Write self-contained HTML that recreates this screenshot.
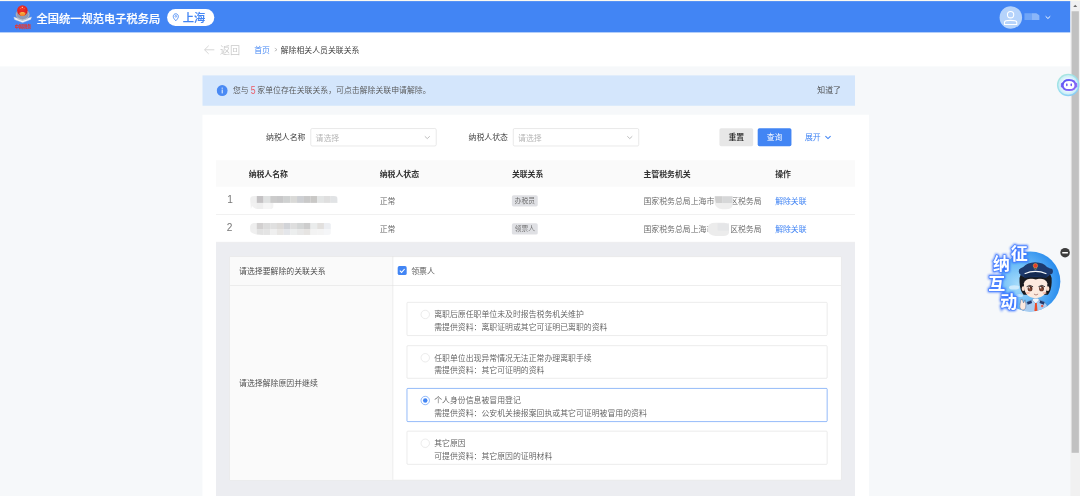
<!DOCTYPE html>
<html lang="zh-CN">
<head>
<meta charset="utf-8">
<title>解除相关人员关联关系</title>
<style>
html,body{margin:0;padding:0;width:1080px;height:496px;overflow:hidden;background:#f6f8fa;}
#stage{position:absolute;left:0;top:0;width:1920px;height:882px;transform:scale(0.5625);transform-origin:0 0;
  font-family:"Liberation Sans","Noto Sans CJK SC",sans-serif;font-size:14px;font-weight:350;color:#333;overflow:hidden;background:#f6f8fa;}
#stage *{box-sizing:border-box;}
.abs{position:absolute;}
.t{position:absolute;white-space:nowrap;line-height:22px;height:22px;}
/* top */
#topstrip{left:0;top:0;width:1920px;height:1.8px;background:#fbf9ef;}
#header{left:0;top:1.8px;width:1903px;height:56px;background:#4285f4;}
#title{left:65px;top:18.5px;font-size:20px;font-weight:500;-webkit-text-stroke:0.35px #fff;color:#fff;line-height:28px;height:28px;letter-spacing:0;}
#pill{left:297px;top:16px;width:84px;height:30px;border-radius:15px;background:#fff;}
#pilltxt{left:325px;top:17.9px;font-size:20px;font-weight:500;-webkit-text-stroke:0.3px #4285f4;color:#4285f4;line-height:28px;height:28px;}
#avatar{left:1777px;top:11px;width:40px;height:40px;border-radius:50%;background:#b5d3fb;}
#uname{left:1820.8px;top:23.4px;width:27.6px;height:12.2px;background:linear-gradient(90deg,#6fa5f7 0,#6fa5f7 50%,#8ab6f9 50%,#8ab6f9 100%);clip-path:polygon(0 0,78% 0,100% 35%,100% 100%,0 100%);}
/* breadcrumb */
#crumb{left:0;top:57.5px;width:1903px;height:60.3px;background:#fff;}
#back{left:391px;top:76.6px;font-size:18px;color:#c9c9c9;line-height:26px;height:26px;}
#home{left:452px;top:78px;color:#4285f4;}
#sep{left:487px;top:78.3px;color:#9a9a9a;font-size:11.5px;transform:scaleX(0.72);font-weight:400;}
#cur{left:499px;top:78px;color:#333;}
/* banner */
#banner{left:360px;top:133.5px;width:1160px;height:54.5px;background:#d4e6fc;}
#bannertxt{left:414px;top:150px;color:#555;}
#bannertxt b{color:#ea5a65;font-weight:400;font-size:18.4px;display:inline-block;transform:scaleX(0.84);margin:0 -1.6px 0 -1px;line-height:22px;vertical-align:top;position:relative;top:0.4px;}
#know{left:1453px;top:150px;color:#444;}
/* card */
#card{left:360px;top:204px;width:1184.6px;height:700px;background:#fff;}
.lbl{color:#333;}
.sel{height:32px;border:1px solid #d8d8d8;border-radius:3px;background:#fff;}
.ph{color:#b2b2b2;}
.btn{height:32px;border-radius:3px;text-align:center;line-height:32px;width:60px;}
/* table */
#thead{left:384px;top:284.5px;width:1136px;height:47.5px;background:#fafafa;}
.th{font-weight:700;color:#333;}
.td{color:#666;}
.hline{height:1px;background:#e7e7e7;left:384px;width:1136px;}
.tag{height:20px;width:46px;border-radius:3px;background:#dfe0e4;color:#666;font-size:12px;line-height:20px;text-align:center;}
.lnk{color:#3f83f4;font-weight:400;}
#panel{left:384px;top:430.7px;width:1136px;height:460px;background:#ecedf1;}
#inner{left:408px;top:455.5px;width:1088px;height:398px;background:#fff;border:1px solid #e0e0e0;}
#lblcol{left:409px;top:456.5px;width:289px;height:396px;background:#fafafa;}
.opt{left:723px;width:748px;height:59.5px;border:1px solid #dedede;border-radius:2px;background:#fff;}
.radio{width:16px;height:16px;border-radius:50%;border:1px solid #dcdcdc;background:#fff;}
.o1{color:#5c5c5c;}
/* scrollbar */
#sbtrack{left:1903px;top:1.8px;width:17px;height:881px;background:#f1f1f1;}
#sbthumb{left:1905px;top:19.5px;width:13px;height:785px;background:#c1c1c1;}
</style>
</head>
<body>
<div id="stage">
  <div class="abs" id="topstrip"></div>
  <div class="abs" id="header"></div>
  <div class="abs" id="crumb"></div>

  <!-- header content -->
  <div class="t" id="title">全国统一规范电子税务局</div>
  <div class="abs" id="pill"></div>
  <div class="t" id="pilltxt">上海</div>
  <div class="abs" id="avatar"></div>
  <div class="abs" id="uname"></div>

  <!-- breadcrumb -->
  <div class="t" id="back">返回</div>
  <div class="t" id="home">首页</div>
  <div class="t" id="sep">&gt;</div>
  <div class="t" id="cur">解除相关人员关联关系</div>

  <!-- banner -->
  <div class="abs" id="banner"></div>
  <div class="t" id="bannertxt">您与 <b>5</b> 家单位存在关联关系，可点击解除关联申请解除。</div>
  <div class="t" id="know">知道了</div>

  <!-- card -->
  <div class="abs" id="card"></div>
  <div class="t lbl" style="left:473px;top:233px;">纳税人名称</div>
  <div class="abs sel" style="left:552px;top:228px;width:224px;"></div>
  <div class="t ph" style="left:561px;top:233.8px;">请选择</div>
  <div class="t lbl" style="left:833px;top:233px;">纳税人状态</div>
  <div class="abs sel" style="left:912px;top:228px;width:224px;"></div>
  <div class="t ph" style="left:921px;top:233.8px;">请选择</div>
  <div class="abs btn" style="left:1279px;top:228px;background:#e7e7e7;color:#1a1a1a;font-weight:500;">重置</div>
  <div class="abs btn" style="left:1347px;top:228px;background:#4285f4;color:#fff;">查询</div>
  <div class="t lnk" style="left:1431px;top:233px;">展开</div>

  <!-- table -->
  <div class="abs" id="thead"></div>
  <div class="t th" style="left:442px;top:298.5px;">纳税人名称</div>
  <div class="t th" style="left:675px;top:298.5px;">纳税人状态</div>
  <div class="t th" style="left:910px;top:298.5px;">关联关系</div>
  <div class="t th" style="left:1144px;top:298.5px;">主管税务机关</div>
  <div class="t th" style="left:1378px;top:298.5px;">操作</div>

  <div class="t td" style="left:403.8px;top:343.6px;font-size:18px;color:#777;">1</div>
  <div class="t td" style="left:675px;top:346px;">正常</div>
  <div class="abs tag" style="left:910px;top:347px;">办税员</div>
  <div class="t td" style="left:1144px;top:346px;">国家税务总局上海市<span class="blur" style="display:inline-block;width:28px;"></span>区税务局</div>
  <div class="t lnk" style="left:1378px;top:346px;">解除关联</div>
  <div class="abs hline" style="top:380.5px;"></div>

  <div class="t td" style="left:403.2px;top:393.6px;font-size:18px;color:#777;">2</div>
  <div class="t td" style="left:675px;top:396.5px;">正常</div>
  <div class="abs tag" style="left:910px;top:396.5px;">领票人</div>
  <div class="t td" style="left:1144px;top:396.5px;">国家税务总局上海市<span class="blur" style="display:inline-block;width:28px;"></span>区税务局</div>
  <div class="t lnk" style="left:1378px;top:396.5px;">解除关联</div>

  <!-- expanded panel -->
  <div class="abs" id="panel"></div>
  <div class="abs hline" style="top:430.4px;background:#e6e6e9;"></div>
  <div class="abs" id="inner"></div>
  <div class="abs" id="lblcol"></div>
  <div class="abs" style="left:698px;top:456px;width:1px;height:397px;background:#e0e0e0;"></div>
  <div class="abs" style="left:409px;top:507px;width:1086px;height:1px;background:#e0e0e0;"></div>
  <div class="t" style="left:425px;top:471.3px;color:#444;">请选择要解除的关联关系</div>
  <div class="abs" style="left:707px;top:473.2px;width:16px;height:16px;border-radius:3px;background:#4285f4;"></div>
  <div class="t" style="left:731px;top:471px;color:#555;">领票人</div>
  <div class="t" style="left:425px;top:670px;color:#444;">请选择解除原因并继续</div>

  <div class="abs opt" style="top:537.4px;"></div>
  <div class="abs radio" style="left:748px;top:551.4px;"></div>
  <div class="t o1" style="left:772px;top:548.4px;">离职后原任职单位未及时报告税务机关维护</div>
  <div class="t o1" style="left:772px;top:570.6px;">需提供资料：离职证明或其它可证明已离职的资料</div>

  <div class="abs opt" style="top:613.7px;"></div>
  <div class="abs radio" style="left:748px;top:627.7px;"></div>
  <div class="t o1" style="left:772px;top:624.7px;">任职单位出现异常情况无法正常办理离职手续</div>
  <div class="t o1" style="left:772px;top:646.9px;">需提供资料：其它可证明的资料</div>

  <div class="abs opt" style="top:690px;border-color:#4285f4;"></div>
  <div class="abs radio" style="left:748px;top:704px;border-color:#4285f4;"></div>
  <div class="abs" style="left:752px;top:708px;width:8px;height:8px;border-radius:50%;background:#4285f4;"></div>
  <div class="t o1" style="left:772px;top:701px;">个人身份信息被冒用登记</div>
  <div class="t o1" style="left:772px;top:723.2px;">需提供资料：公安机关接报案回执或其它可证明被冒用的资料</div>

  <div class="abs opt" style="top:766.3px;"></div>
  <div class="abs radio" style="left:748px;top:780.3px;"></div>
  <div class="t o1" style="left:772px;top:777.3px;">其它原因</div>
  <div class="t o1" style="left:772px;top:799.5px;">可提供资料：其它原因的证明材料</div>


  <!-- logo -->
  <svg class="abs" style="left:22px;top:6px;" width="40" height="50" viewBox="22 6 40 50">
    <defs>
      <radialGradient id="lgR" cx="0.45" cy="0.3" r="0.75"><stop offset="0" stop-color="#f2382f"/><stop offset="1" stop-color="#d4141a"/></radialGradient>
      <linearGradient id="lgG" x1="0" y1="0" x2="0" y2="1"><stop offset="0" stop-color="#f9b43a"/><stop offset="1" stop-color="#ee7a2e"/></linearGradient>
    </defs>
    <ellipse cx="40.3" cy="26" rx="11" ry="8.8" fill="#8f9bb4" stroke="#8996b0" stroke-width="3.6" stroke-dasharray="2.4 0.6"/>
    <ellipse cx="40.3" cy="26" rx="11" ry="8.8" fill="none" stroke="#c3cada" stroke-width="1"/>
    <path d="M24.6 30.4 L40 36 L56 30.2 L54.6 34.6 L40.2 40.2 L26 34.8 Z" fill="#f1f3f7" stroke="#cdd3de" stroke-width="0.7"/>
    <path d="M31 33.4 L40 36.6 L49.4 33.2" fill="none" stroke="#a6afc0" stroke-width="1.1"/>
    <circle cx="39.8" cy="18.6" r="9.3" fill="url(#lgR)"/>
    <path d="M34.6 22.6 Q39.8 20.8 45.2 22.6 Q45.6 25.4 43.8 27.4 Q42 28.6 39.9 28.6 Q37.8 28.6 36 27.4 Q34.2 25.4 34.6 22.6 Z" fill="url(#lgG)"/>
    <path d="M36.8 22.2 h6.2 v1.1 h-6.2 z" fill="#fcd75c"/>
    <circle cx="39.7" cy="13" r="1.2" fill="#ffe9a8"/>
    <circle cx="36.6" cy="15.4" r="0.55" fill="#fbd36b"/><circle cx="42.9" cy="15.4" r="0.55" fill="#fbd36b"/>
    <text x="40.8" y="49.4" font-size="7.6" font-weight="900" fill="#e9352d" text-anchor="middle" font-family="'Liberation Sans','Noto Sans CJK SC',sans-serif" letter-spacing="-0.2">中国税务</text>
  </svg>
  <!-- pin -->
  <svg class="abs" style="left:306.3px;top:23.3px;" width="13.1" height="16" viewBox="0 0 15 17" preserveAspectRatio="none">
    <path d="M7.5 1.6 C4.5 1.6 2.3 3.8 2.3 6.6 C2.3 9.6 5 12.3 7.5 14.8 C10 12.3 12.7 9.6 12.7 6.6 C12.7 3.8 10.5 1.6 7.5 1.6 Z" fill="none" stroke="#4285f4" stroke-width="1.7"/>
    <circle cx="7.5" cy="6.4" r="1.7" fill="none" stroke="#4285f4" stroke-width="1.3"/>
  </svg>
  <!-- avatar icon -->
  <svg class="abs" style="left:1777px;top:11px;" width="40" height="40" viewBox="0 0 40 40">
    <circle cx="19.6" cy="15.2" r="5.6" fill="none" stroke="#fff" stroke-width="1.9"/>
    <path d="M8.8 32.6 V28.4 Q8.8 25.2 19.6 25.2 Q30.6 25.2 30.6 28.4 V32.6 Z" fill="none" stroke="#fff" stroke-width="1.9" stroke-linejoin="round"/>
  </svg>
  <svg class="abs" style="left:1855px;top:24px;" width="16" height="14" viewBox="0 0 16 14">
    <path d="M3.9 5 L8 8.9 L12.1 5" fill="none" stroke="#fff" stroke-width="1.7"/>
  </svg>
  <!-- back arrow -->
  <svg class="abs" style="left:360px;top:78px;" width="24" height="22" viewBox="0 0 24 22">
    <path d="M21 10.5 H4 M11 3.2 L3.6 10.5 L11 17.8" fill="none" stroke="#cfcfcf" stroke-width="1.5"/>
  </svg>
  <!-- info icon -->
  <svg class="abs" style="left:385px;top:151px;" width="20" height="20" viewBox="0 0 20 20">
    <circle cx="10" cy="10" r="9.7" fill="#4a8af4"/>
    <rect x="9.1" y="8.2" width="1.9" height="6.8" fill="#e6effe"/>
    <rect x="9.1" y="4.8" width="1.9" height="2" fill="#e6effe"/>
  </svg>
  <!-- select chevrons -->
  <svg class="abs" style="left:752px;top:236px;" width="16" height="16" viewBox="0 0 16 16"><path d="M3.2 6.3 L7.6 10.4 L12 6.3" fill="none" stroke="#a6a6a6" stroke-width="1.3"/></svg>
  <svg class="abs" style="left:1112px;top:236px;" width="16" height="16" viewBox="0 0 16 16"><path d="M3.2 6.3 L7.6 10.4 L12 6.3" fill="none" stroke="#a6a6a6" stroke-width="1.3"/></svg>
  <svg class="abs" style="left:1464px;top:236px;" width="16" height="16" viewBox="0 0 16 16"><path d="M3.4 6 L8 10.4 L12.6 6" fill="none" stroke="#3f83f4" stroke-width="1.9"/></svg>
  <!-- checkbox check -->
  <svg class="abs" style="left:707px;top:473.2px;" width="16" height="16" viewBox="0 0 16 16"><path d="M3.8 8.2 L6.9 11.2 L12.3 5.2" fill="none" stroke="#fff" stroke-width="1.9"/></svg>


  <!-- blurred (redacted) names -->
  <svg class="abs" style="left:430px;top:340px;" width="190" height="90" viewBox="430 340 190 90">
    <defs><filter id="mb" x="-5%" y="-20%" width="110%" height="140%"><feGaussianBlur stdDeviation="0.9"/></filter>
    <clipPath id="mc1"><path d="M444.6 354 Q444.6 348.5 452 348.5 H594 Q600.5 348.5 600.5 354 V361 H486 V366 Q486 372 478 372 H462 Q452 372 448 366 L446 372 Z"/></clipPath>
    <clipPath id="mc2"><path d="M444.6 404 Q444.6 397 456 397 H582 Q589 397 589 402 V414 Q589 419 582 419 H470 Q444.6 419 444.6 410 Z"/></clipPath></defs>
    <g filter="url(#mb)"><g clip-path="url(#mc1)"><rect x="444.6" y="348.5" width="12.2" height="12.5" fill="#efefef"/><rect x="456.5" y="348.5" width="12.2" height="12.5" fill="#c4c2c4"/><rect x="468.5" y="348.5" width="12.2" height="12.5" fill="#dfe1e1"/><rect x="480.4" y="348.5" width="12.2" height="12.5" fill="#cbcbcb"/><rect x="492.3" y="348.5" width="12.2" height="12.5" fill="#c8c8c9"/><rect x="504.2" y="348.5" width="12.2" height="12.5" fill="#cfd1d1"/><rect x="516.2" y="348.5" width="12.2" height="12.5" fill="#d9d9d7"/><rect x="528.1" y="348.5" width="12.2" height="12.5" fill="#cdcfd3"/><rect x="540.0" y="348.5" width="12.2" height="12.5" fill="#c9c9c9"/><rect x="552.0" y="348.5" width="12.2" height="12.5" fill="#c9c8c6"/><rect x="563.9" y="348.5" width="12.2" height="12.5" fill="#e3e5e5"/><rect x="575.8" y="348.5" width="12.2" height="12.5" fill="#dfdfdf"/><rect x="587.8" y="348.5" width="12.2" height="12.5" fill="#e1e3e5"/><rect x="444.6" y="360.7" width="12.2" height="11.2" fill="#f1f1f1"/><rect x="456.5" y="360.7" width="12.2" height="11.2" fill="#eeeeee"/><rect x="468.5" y="360.7" width="12.2" height="11.2" fill="#f6f6f6"/><rect x="480.4" y="360.7" width="12.2" height="11.2" fill="#f3f3f3"/><rect x="492.3" y="360.7" width="12.2" height="11.2" fill="#fafafa"/><rect x="504.2" y="360.7" width="12.2" height="11.2" fill="#fafafa"/><rect x="516.2" y="360.7" width="12.2" height="11.2" fill="#fbfbfb"/><rect x="528.1" y="360.7" width="12.2" height="11.2" fill="#fbfbfb"/><rect x="540.0" y="360.7" width="12.2" height="11.2" fill="#fbfbfb"/><rect x="552.0" y="360.7" width="12.2" height="11.2" fill="#fbfbfb"/><rect x="563.9" y="360.7" width="12.2" height="11.2" fill="#fcfcfc"/><rect x="575.8" y="360.7" width="12.2" height="11.2" fill="#fcfcfc"/><rect x="587.8" y="360.7" width="12.2" height="11.2" fill="#fdfdfd"/></g>
    <g clip-path="url(#mc2)" transform="translate(0,-1.2)"><rect x="444.6" y="397.0" width="12.2" height="11.7" fill="#eeeeee"/><rect x="456.5" y="397.0" width="12.2" height="11.7" fill="#d2d0d0"/><rect x="468.5" y="397.0" width="12.2" height="11.7" fill="#dcdcdc"/><rect x="480.4" y="397.0" width="12.2" height="11.7" fill="#e0e0e0"/><rect x="492.3" y="397.0" width="12.2" height="11.7" fill="#dddbd9"/><rect x="504.2" y="397.0" width="12.2" height="11.7" fill="#d2d4d8"/><rect x="516.2" y="397.0" width="12.2" height="11.7" fill="#dedede"/><rect x="528.1" y="397.0" width="12.2" height="11.7" fill="#d4d6d6"/><rect x="540.0" y="397.0" width="12.2" height="11.7" fill="#cdcdcd"/><rect x="552.0" y="397.0" width="12.2" height="11.7" fill="#eaecec"/><rect x="563.9" y="397.0" width="12.2" height="11.7" fill="#e2e0de"/><rect x="575.8" y="397.0" width="12.2" height="11.7" fill="#eceef2"/><rect x="444.6" y="408.4" width="12.2" height="10.5" fill="#efefef"/><rect x="456.5" y="408.4" width="12.2" height="10.5" fill="#e2e2e2"/><rect x="468.5" y="408.4" width="12.2" height="10.5" fill="#e4e4e4"/><rect x="480.4" y="408.4" width="12.2" height="10.5" fill="#efefef"/><rect x="492.3" y="408.4" width="12.2" height="10.5" fill="#e8e6e4"/><rect x="504.2" y="408.4" width="12.2" height="10.5" fill="#e4e6ea"/><rect x="516.2" y="408.4" width="12.2" height="10.5" fill="#eceeee"/><rect x="528.1" y="408.4" width="12.2" height="10.5" fill="#e8e8e8"/><rect x="540.0" y="408.4" width="12.2" height="10.5" fill="#e6e4e2"/><rect x="552.0" y="408.4" width="12.2" height="10.5" fill="#f3f3f3"/><rect x="563.9" y="408.4" width="12.2" height="10.5" fill="#f4f4f4"/><rect x="575.8" y="408.4" width="12.2" height="10.5" fill="#f5f6f8"/></g></g>
  </svg>


  <!-- redaction blobs over authority names -->
  <svg class="abs" style="left:1250px;top:340px;" width="70" height="90" viewBox="1250 340 70 90">
    <defs><filter id="bb" x="-10%" y="-10%" width="120%" height="120%"><feGaussianBlur stdDeviation="0.8"/></filter></defs>
    <g filter="url(#bb)">
      <path d="M1270 349 H1303 V362 Q1303 372 1290 372 H1284 Q1271 370 1270 358 Z" fill="#eeeeee"/>
      <path d="M1271 349 H1284 V361 H1273 Q1271 356 1271 349 Z" fill="#cfcfcf"/>
      <path d="M1284 349 H1302 V361 H1284 Z" fill="#d6d7d8"/>
      <path d="M1258 406 Q1258 396 1272 396 H1288 Q1296 397 1296 404 V414 Q1294 419 1286 419.4 H1272 Q1258 418 1258 406 Z" fill="#ececec"/>
      <path d="M1276 397 H1296 V410 H1276 Z" fill="#e4e5e7" opacity="0.8"/>
    </g>
  </svg>

  <!-- scrollbar -->
  <div class="abs" id="sbtrack"></div>
  <div class="abs" id="sbthumb"></div>
  <svg class="abs" style="left:1903px;top:1.8px;" width="17" height="17" viewBox="0 0 17 17"><path d="M5 10.5 L8.5 6.5 L12 10.5 Z" fill="#6a6a6a"/></svg>

  <!-- mascot widget -->
  <svg class="abs" style="left:1751.1px;top:423.1px;" width="160" height="149.33" viewBox="0 0 531 496">
    <defs>
      <radialGradient id="msC" cx="0.3" cy="0.55" r="0.75"><stop offset="0" stop-color="#a6dcfb"/><stop offset="0.45" stop-color="#6cbcf7"/><stop offset="1" stop-color="#1f85ec"/></radialGradient>
      <filter id="glow" x="-40%" y="-40%" width="180%" height="180%"><feGaussianBlur stdDeviation="7"/></filter>
      <clipPath id="msClip"><circle cx="267.5" cy="257" r="177.5"/></clipPath>
    </defs>
    <circle cx="267.5" cy="257" r="177.5" fill="url(#msC)"/>
    <ellipse cx="172" cy="292" rx="30" ry="13" fill="#d7effd" opacity="0.85"/>
    <ellipse cx="205" cy="340" rx="20" ry="9" fill="#d7effd" opacity="0.7"/>
    <g clip-path="url(#msClip)">
      <!-- body -->
      <path d="M222 440 Q226 384 262 372 L300 362 L338 372 Q372 384 378 440 Z" fill="#a9cdf1" stroke="#5b7fae" stroke-width="3"/>
      <path d="M278 366 L300 388 L322 366 L312 356 L288 356 Z" fill="#eef5fc" stroke="#5b7fae" stroke-width="2.5"/>
      <path d="M296 384 L306 384 L310 430 L301 442 L292 430 Z" fill="#ef4a23"/>
      <path d="M248 378 L274 370 L278 384 L252 394 Z" fill="#22396b"/>
      <path d="M352 378 L326 370 L322 384 L348 394 Z" fill="#22396b"/>
      <circle cx="338" cy="402" r="7" fill="#e2574a"/>
      <!-- hair -->
      <path d="M204 262 Q196 210 240 196 L356 196 Q402 210 394 262 Q392 312 372 336 L228 336 Q206 312 204 262 Z" fill="#191a1f"/>
      <!-- face -->
      <path d="M230 268 Q232 238 298 236 Q366 238 368 268 Q372 352 298 356 Q226 352 230 268 Z" fill="#fdeadf"/>
      <path d="M226 248 Q262 232 300 246 Q340 230 372 250 L366 226 L232 226 Z" fill="#191a1f"/>
      <ellipse cx="226" cy="300" rx="9" ry="14" fill="#fbdccc"/>
      <ellipse cx="371" cy="300" rx="9" ry="14" fill="#fbdccc"/>
      <!-- eyes -->
      <ellipse cx="266" cy="300" rx="14" ry="15.5" fill="#5a2e22"/>
      <ellipse cx="334" cy="300" rx="14" ry="15.5" fill="#5a2e22"/>
      <ellipse cx="266" cy="304" rx="8" ry="8" fill="#8a4a35"/>
      <ellipse cx="334" cy="304" rx="8" ry="8" fill="#8a4a35"/>
      <circle cx="261" cy="294" r="4.5" fill="#fff"/><circle cx="329" cy="294" r="4.5" fill="#fff"/>
      <path d="M246 288 Q264 272 284 288" fill="none" stroke="#191a1f" stroke-width="5"/>
      <path d="M316 288 Q336 272 354 288" fill="none" stroke="#191a1f" stroke-width="5"/>
      <ellipse cx="254" cy="325" rx="12" ry="6.5" fill="#f9b9a6" opacity="0.85"/>
      <ellipse cx="352" cy="325" rx="12" ry="6.5" fill="#f9b9a6" opacity="0.85"/>
      <path d="M291 333 Q301 343 312 333" fill="none" stroke="#6a2a22" stroke-width="3" stroke-linecap="round"/>
      <!-- hat -->
      <ellipse cx="214" cy="197" rx="14" ry="17" fill="#1e3a6e"/><ellipse cx="388" cy="197" rx="13" ry="17" fill="#1e3a6e"/><path d="M204 208 Q196 180 226 172 Q250 146 296 144 Q346 146 366 172 Q398 180 390 208 Q380 226 362 232 L232 232 Q212 226 204 208 Z" fill="#1e3a6e"/>
      <path d="M232 214 Q298 188 364 214 L364 238 Q298 218 232 238 Z" fill="#152a52"/>
      <path d="M234 211 Q298 184 363 211" fill="none" stroke="#f4f6fa" stroke-width="6"/>
      <circle cx="298" cy="164" r="13" fill="#e33a2d"/>
      <circle cx="298" cy="164" r="13" fill="none" stroke="#f2b53a" stroke-width="3"/>
      <path d="M288 180 L298 186 L308 180" fill="none" stroke="#f2b53a" stroke-width="3"/>
      <!-- hand -->
      <path d="M212 364 L208 388 Q200 410 214 424 Q232 432 240 414 L242 390 L236 366 L228 384 L220 362 Z" fill="#fdeadf" stroke="#5b6f96" stroke-width="3" stroke-linejoin="round"/>
    </g>
    <!-- glowing text -->
    <g font-family="'Liberation Sans','Noto Sans CJK SC',sans-serif" font-weight="700" font-size="100" text-anchor="middle">
      <g fill="#2f6bff" stroke="#2f6bff" stroke-width="14" filter="url(#glow)" opacity="0.95">
        <text x="202" y="128">征</text><text x="97" y="191">纳</text><text x="70" y="306">互</text><text x="140" y="411">动</text>
      </g>
      <g fill="#4f86ff" stroke="#4f86ff" stroke-width="8" stroke-linejoin="round" opacity="0.9">
        <text x="202" y="128">征</text><text x="97" y="191">纳</text><text x="70" y="306">互</text><text x="140" y="411">动</text>
      </g>
      <g fill="#ffffff">
        <text x="202" y="128">征</text><text x="97" y="191">纳</text><text x="70" y="306">互</text><text x="140" y="411">动</text>
      </g>
    </g>
    <!-- minimise -->
    <circle cx="473" cy="87" r="28" fill="#3d3d3d"/>
    <rect x="456" y="82.5" width="34" height="9" rx="2" fill="#fff"/>
  </svg>

  <!-- assistant robot -->
  <svg class="abs" style="left:1877px;top:129px;" width="44" height="44" viewBox="0 0 44 44">
    <defs>
      <linearGradient id="rbO" x1="0.2" y1="0" x2="0.8" y2="1"><stop offset="0" stop-color="#a9e6dc"/><stop offset="0.55" stop-color="#9adff0"/><stop offset="1" stop-color="#86c9f7"/></linearGradient>
      <radialGradient id="rbI" cx="0.5" cy="0.5" r="0.5"><stop offset="0" stop-color="#ffffff"/><stop offset="0.7" stop-color="#e4f6fc"/><stop offset="1" stop-color="#c4ecf6"/></radialGradient>
      <linearGradient id="rbH" x1="0" y1="0" x2="1" y2="1"><stop offset="0" stop-color="#5b55f4"/><stop offset="1" stop-color="#8d6af7"/></linearGradient>
    </defs>
    <circle cx="22" cy="22" r="20" fill="url(#rbO)"/>
    <circle cx="22" cy="22" r="17.6" fill="url(#rbI)"/>
    <rect x="9" y="18" width="5" height="9" rx="2.5" fill="#7a60f5"/>
    <rect x="33.2" y="18" width="5" height="9" rx="2.5" fill="#8d6af7"/>
    <path d="M12.4 22.8 C12.4 15.6 16.8 13.2 23.6 13.2 C30.4 13.2 34.8 15.6 34.8 22.8 C34.8 29.2 30.6 31 23.6 31 C16.6 31 12.4 29.2 12.4 22.8 Z" fill="#fff" stroke="url(#rbH)" stroke-width="3.2"/>
    <ellipse cx="19.6" cy="21.6" rx="1.25" ry="2.7" fill="#5b3ff0"/>
    <ellipse cx="27.4" cy="21.6" rx="1.25" ry="2.7" fill="#5b3ff0"/>
  </svg>

</div>
</body>
</html>
